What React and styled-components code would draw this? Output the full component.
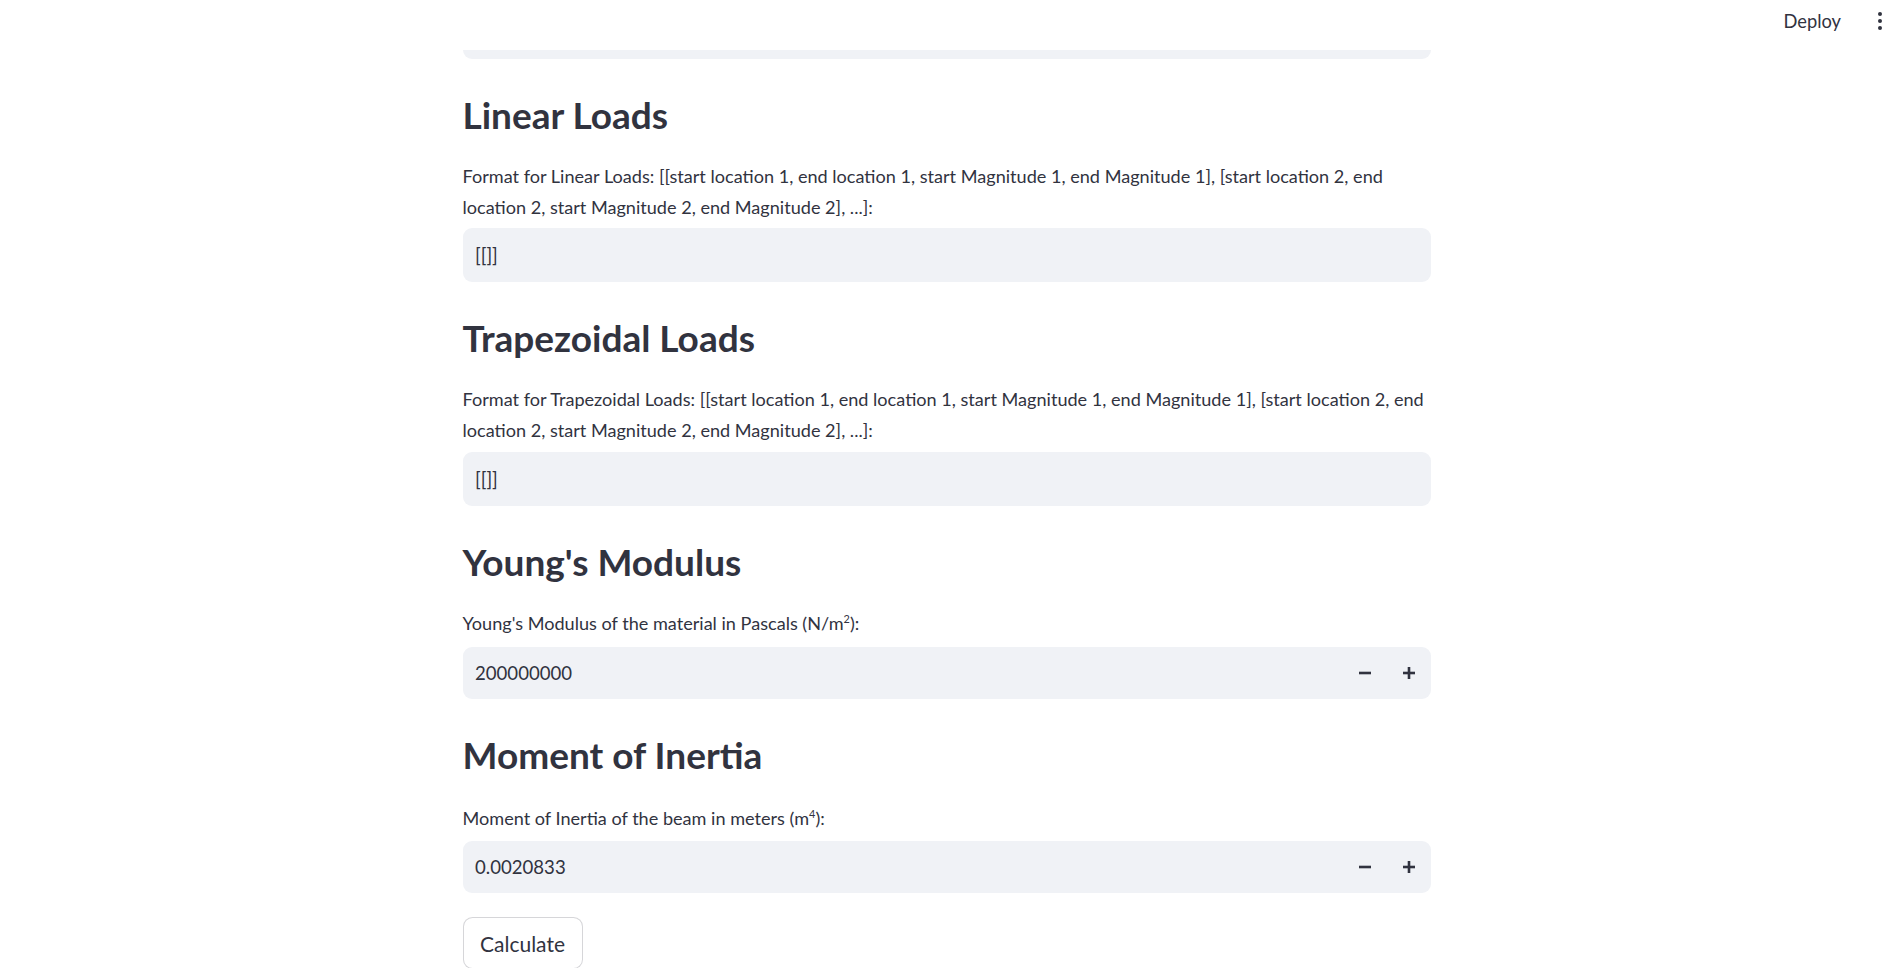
import styled, { createGlobalStyle } from 'styled-components';

const GlobalStyle = createGlobalStyle`
	html, body {
		margin: 0;
		padding: 0;
		background: #fff;
	}
	body {
		font-family: Lato, 'Source Sans Pro', sans-serif;
		color: #31333f;
		overflow: hidden;
	}
	* {
		box-sizing: border-box;
	}
`;

const Header = styled.header`
	position: fixed;
	top: 0;
	left: 0;
	right: 0;
	height: 50px;
	padding: 0 15px 8px 0;
	display: flex;
	align-items: center;
	justify-content: flex-end;
	background: #fff;
	z-index: 10;
`;

const DeployButton = styled.button`
	border: none;
	background: none;
	padding: 0;
	margin-right: 37px;
	font-family: inherit;
	font-size: 18.3px;
	color: #31333f;
	cursor: pointer;
`;

const MenuDots = styled.div`
	display: flex;
	flex-direction: column;
	gap: 3px;

	span {
		width: 4px;
		height: 4px;
		border-radius: 50%;
		background: #31333f;
	}
`;

const Main = styled.main`
	width: 968px;
	margin: 0 auto;
	padding: 5px 0 0;
	box-sizing: content-box;
	padding-right: 4px;
	display: flex;
	flex-direction: column;
`;

const Section = styled.section`
	padding-top: 32px;
	display: flex;
	flex-direction: column;
`;

const Heading = styled.h2`
	margin: 0 0 ${(p) => p.$gap || 22}px;
	font-size: 37px;
	font-weight: 700;
	line-height: 48px;
	color: #31333f;
`;

const Label = styled.p`
	margin: 0 0 ${(p) => p.$gap}px;
	font-size: 18.1px;
	line-height: 30.7px;
	color: #31333f;

	sup {
		font-size: 0.6em;
		line-height: 0;
	}
`;

const TextBox = styled.div`
	height: ${(p) => p.$height || 54}px;
	padding: 0 12.5px;
	display: flex;
	align-items: center;
	background: #f0f2f6;
	border-radius: ${(p) => (p.$cut ? '0 0 9px 9px' : '9px')};
	font-size: 18.6px;
	color: #31333f;
`;

const NumberBox = styled.div`
	height: 52px;
	padding-left: 12.5px;
	display: flex;
	align-items: center;
	background: #f0f2f6;
	border-radius: 9px;
	font-size: 18.6px;
	color: #31333f;
`;

const Value = styled.span`
	flex: 1;
`;

const StepButton = styled.button`
	width: 44px;
	height: 100%;
	border: none;
	background: none;
	padding: 0;
	display: flex;
	align-items: center;
	justify-content: center;
	color: #31333f;
	cursor: pointer;
`;

const CalcButton = styled.button`
	align-self: flex-start;
	margin-top: 24px;
	width: 120px;
	height: 52px;
	border: 1px solid rgba(49, 51, 63, 0.2);
	border-radius: 9.6px;
	background: #fff;
	font-family: inherit;
	font-size: 21px;
	color: #31333f;
	cursor: pointer;
`;

function Minus() {
	return (
		<svg width="12" height="12" viewBox="0 0 12 12">
			<rect x="0" y="4.7" width="12" height="2.6" fill="currentColor" />
		</svg>
	);
}

function Plus() {
	return (
		<svg width="12" height="12" viewBox="0 0 12 12">
			<rect x="0" y="4.7" width="12" height="2.6" fill="currentColor" />
			<rect x="4.7" y="0" width="2.6" height="12" fill="currentColor" />
		</svg>
	);
}

function NumberInput({ value }) {
	return (
		<NumberBox>
			<Value>{value}</Value>
			<StepButton aria-label="decrement">
				<Minus />
			</StepButton>
			<StepButton aria-label="increment">
				<Plus />
			</StepButton>
		</NumberBox>
	);
}

function App() {
	return (
		<>
			<GlobalStyle />
			<Header>
				<DeployButton>Deploy</DeployButton>
				<MenuDots>
					<span />
					<span />
					<span />
				</MenuDots>
			</Header>
			<Main>
				<TextBox $cut />

				<Section>
					<Heading>Linear Loads</Heading>
					<Label $gap={6}>
						Format for Linear Loads: [[start location 1, end location 1, start Magnitude 1, end
						Magnitude 1], [start location 2, end location 2, start Magnitude 2, end Magnitude 2],
						...]:
					</Label>
					<TextBox>[[]]</TextBox>
				</Section>

				<Section>
					<Heading>Trapezoidal Loads</Heading>
					<Label $gap={6}>
						Format for Trapezoidal Loads: [[start location 1, end location 1, start Magnitude 1,
						end Magnitude 1], [start location 2, end location 2, start Magnitude 2, end Magnitude
						2], ...]:
					</Label>
					<TextBox>[[]]</TextBox>
				</Section>

				<Section>
					<Heading>Young's Modulus</Heading>
					<Label $gap={8}>
						Young's Modulus of the material in Pascals (N/m<sup>2</sup>):
					</Label>
					<NumberInput value="200000000" />
				</Section>

				<Section>
					<Heading $gap={24}>Moment of Inertia</Heading>
					<Label $gap={8}>
						Moment of Inertia of the beam in meters (m<sup>4</sup>):
					</Label>
					<NumberInput value="0.0020833" />
				</Section>

				<CalcButton>Calculate</CalcButton>
			</Main>
		</>
	);
}

export default App;
